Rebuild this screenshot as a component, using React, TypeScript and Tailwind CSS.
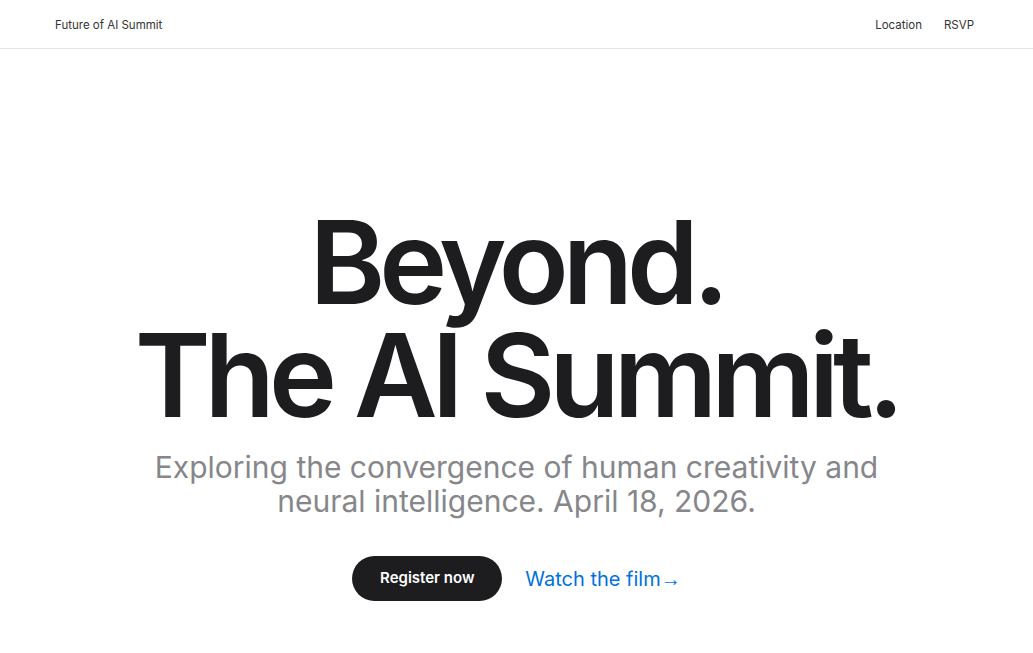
export default function App() {
  return (
    <div className="min-h-screen bg-white text-[#1d1d1f] font-['Inter',sans-serif]">
      <header className="h-[49px] pt-[3px] border-b border-[#e5e5e5] flex items-center justify-between pl-[55px] pr-[59px]">
        <span className="text-[11.5px] text-[#333]">Future of AI Summit</span>
        <nav className="flex items-center gap-[22px] text-[11.5px] text-[#333]">
          <a>Location</a>
          <a>RSVP</a>
        </nav>
      </header>
      <main className="flex flex-col items-center text-center pt-[157px]">
        <h1 className="text-[115px] leading-[113px] font-semibold tracking-[-0.052em]">
          Beyond.
          <br />
          The AI Summit.
        </h1>
        <p className="mt-[18px] text-[30px] leading-[34px] text-[#86868b] max-w-[760px]">
          Exploring the convergence of human creativity and neural intelligence. April 18, 2026.
        </p>
        <div className="mt-[38px] flex items-center gap-[23px]">
          <button className="h-[45px] w-[150px] rounded-full bg-[#1d1d1f] text-white text-[15px] font-semibold">
            Register now
          </button>
          <a className="text-[20px] text-[#0071e3]">
            Watch the film<span className="font-['Liberation_Sans',sans-serif]">→</span>
          </a>
        </div>
      </main>
    </div>
  )
}
